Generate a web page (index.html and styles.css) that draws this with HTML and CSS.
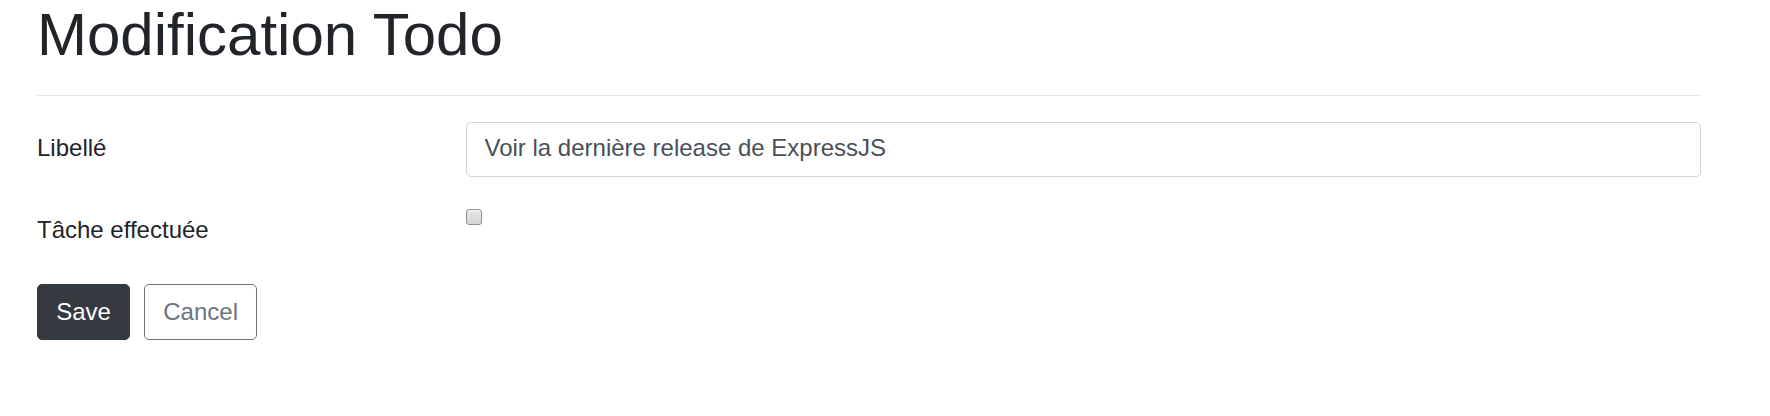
FILE: index.html
```html
<!DOCTYPE html>
<html lang="fr">
<head>
<meta charset="utf-8">
<title>Modification Todo</title>
<link rel="stylesheet" href="styles.css">
</head>
<body>
<main class="page">
  <h1 class="title">Modification Todo</h1>
  <hr class="divider">
  <form class="form">
    <div class="row row-text">
      <label class="label" for="libelle">Libellé</label>
      <div class="field">
        <input id="libelle" class="input" type="text" value="Voir la dernière release de ExpressJS">
      </div>
    </div>
    <div class="row row-check">
      <label class="label" for="done">Tâche effectuée</label>
      <div class="field">
        <input id="done" class="check" type="checkbox">
      </div>
    </div>
    <div class="actions">
      <button type="submit" class="btn btn-dark">Save</button>
      <button type="button" class="btn btn-outline">Cancel</button>
    </div>
  </form>
</main>
</body>
</html>
```
FILE: styles.css
```css
html, body {
  margin: 0;
  padding: 0;
  background: #ffffff;
}

body {
  font-family: "Liberation Sans", Arial, sans-serif;
  color: #212529;
}

.page {
  width: 1664px;
  padding-left: 37px;
}

.title {
  margin: 0;
  font-size: 60px;
  font-weight: 400;
  line-height: 69px;
  color: #212529;
}

.divider {
  margin: 26px 0 0 0;
  height: 0;
  border: 0;
  border-top: 1px solid #e5e5e5;
}

.form {
  margin-top: 26px;
}

.row {
  display: grid;
  grid-template-columns: 429px 1fr;
  align-items: start;
}

.row-check {
  margin-top: 27px;
}

.label {
  display: block;
  padding-top: 8px;
  font-size: 24px;
  line-height: 35px;
  color: #212529;
}

.input {
  display: block;
  box-sizing: border-box;
  width: 100%;
  height: 55px;
  margin: 0;
  padding: 0 17.5px 3px 17.5px;
  border: 1px solid #ced4da;
  border-radius: 5px;
  background: #ffffff;
  font-family: "Liberation Sans", Arial, sans-serif;
  font-size: 24px;
  color: #495057;
  outline: none;
}

.check {
  -webkit-appearance: none;
  appearance: none;
  display: block;
  box-sizing: border-box;
  width: 16px;
  height: 16px;
  margin: 5px 0 0 0;
  border: 1px solid #929292;
  border-radius: 3px;
  background: linear-gradient(#e8e8e8, #d4d4d4);
  box-shadow: inset 0 1px 0 rgba(255, 255, 255, 0.6);
}

.actions {
  display: flex;
  gap: 14px;
  margin-top: 37px;
}

.btn {
  box-sizing: border-box;
  height: 56px;
  margin: 0;
  padding: 0 18.2px;
  border: 1px solid transparent;
  border-radius: 5px;
  font-family: "Liberation Sans", Arial, sans-serif;
  font-size: 24px;
  line-height: 1;
  cursor: pointer;
}

.btn-dark {
  background: #343a40;
  border-color: #343a40;
  color: #ffffff;
}

.btn-outline {
  background: #ffffff;
  border-color: #6c757d;
  color: #6c757d;
}
```
